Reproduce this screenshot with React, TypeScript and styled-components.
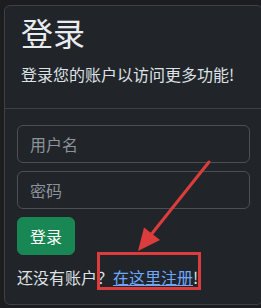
import React from 'react';
import styled, { createGlobalStyle } from 'styled-components';

const GlobalStyle = createGlobalStyle`
  html, body {
    margin: 0;
    padding: 0;
    background: #1b1d20;
    overflow: hidden;
  }

  body {
    font-family: 'Noto Sans CJK SC', 'Noto Sans', sans-serif;
    color: #dee2e6;
    font-size: 16px;
    line-height: 1.5;
  }
`;

const Page = styled.div`
  position: relative;
  width: 261px;
  height: 308px;
  padding: 5px 0 0 4px;
  box-sizing: border-box;
`;

const Card = styled.div`
  width: 259px;
  box-sizing: border-box;
  background: #212529;
  border: 1px solid #3d4044;
  border-radius: 6px;
`;

const CardHeader = styled.div`
  padding: 7px 16px 22px;
  border-bottom: 1px solid #3d4044;
`;

const Title = styled.h2`
  margin: 0 0 11px;
  font-size: 32px;
  font-weight: 400;
  line-height: 1.2;
  color: #e9ecef;
`;

const Lead = styled.p`
  margin: 0;
  font-size: 16px;
  line-height: 24px;
`;

const CardBody = styled.div`
  padding: 16px 12px 15px;
`;

const Input = styled.input`
  display: block;
  width: 100%;
  height: 38px;
  box-sizing: border-box;
  margin-bottom: 8px;
  padding: 6px 12px;
  font-family: inherit;
  font-size: 16px;
  color: #dee2e6;
  background: #212529;
  border: 1px solid #495057;
  border-radius: 6px;
  outline: none;

  &::placeholder {
    color: #8d939a;
  }
`;

const Button = styled.button`
  display: inline-block;
  height: 38px;
  padding: 0 12px;
  font-family: inherit;
  font-size: 16px;
  color: #fff;
  background: #198754;
  border: 1px solid #198754;
  border-radius: 6px;
`;

const Footnote = styled.p`
  margin: 10px 0 0;
  font-size: 16px;
  line-height: 24px;
`;

const RegisterLink = styled.a`
  color: #6ea8fe;
  text-decoration: underline;
`;

const Annotation = styled.svg`
  position: absolute;
  left: 0;
  top: 0;
  pointer-events: none;
`;

export default function App() {
  return (
    <Page>
      <GlobalStyle />
      <Card>
        <CardHeader>
          <Title>登录</Title>
          <Lead>登录您的账户以访问更多功能!</Lead>
        </CardHeader>
        <CardBody>
          <Input type="text" placeholder="用户名" />
          <Input type="password" placeholder="密码" />
          <Button>登录</Button>
          <Footnote>
            还没有账户？<RegisterLink href="#">在这里注册</RegisterLink>!
          </Footnote>
        </CardBody>
      </Card>
      <Annotation width="261" height="308" viewBox="0 0 261 308">
        <line x1="209" y1="162" x2="150" y2="236" stroke="#dc3c3c" strokeWidth="3" strokeLinecap="round" />
        <polygon points="138,251 144,227.5 160,240" fill="#dc3c3c" />
        <rect x="98.5" y="253.5" width="101" height="35" fill="none" stroke="#dc3c3c" strokeWidth="3" />
      </Annotation>
    </Page>
  );
}
